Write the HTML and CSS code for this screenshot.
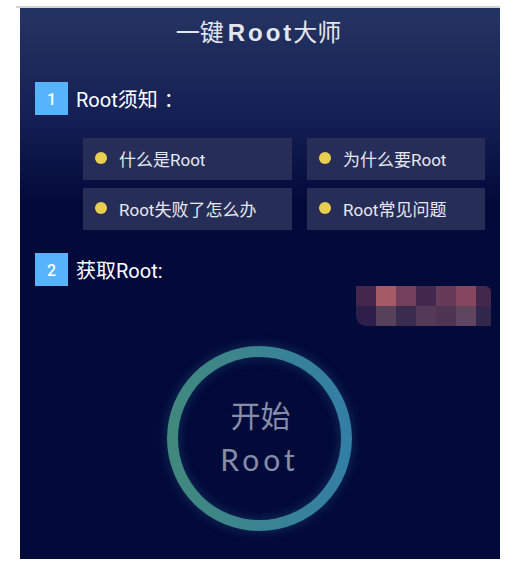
FILE: index.html
```html
<!DOCTYPE html>
<html lang="zh-CN">
  <head>
    <meta charset="UTF-8" />
    <title>一键Root大师</title>
    <link rel="stylesheet" href="styles.css">
  </head>
  <body>
    <div class="top-line"></div>
    <div class="app">
      <h1 class="title">一键<b>Root</b>大师</h1>

      <!-- Root须知 -->
      <div class="step">
        <span class="step-num">1</span>
        <span class="step-text">Root须知<span class="colon">：</span></span>
      </div>
      <div class="faq">
        <div class="faq-item"><i class="dot"></i>什么是Root</div>
        <div class="faq-item"><i class="dot"></i>为什么要Root</div>
        <div class="faq-item"><i class="dot"></i>Root失败了怎么办</div>
        <div class="faq-item"><i class="dot"></i>Root常见问题</div>
      </div>

      <!-- 获取Root -->
      <div class="step step-two">
        <span class="step-num">2</span>
        <span class="step-text">获取Root:</span>
      </div>

      <!-- 打码区域 -->
      <div class="mosaic">
        <i class="m1"></i><i class="m2"></i><i class="m3"></i><i class="m4"></i><i class="m5"></i><i class="m6"></i><i class="m7"></i>
        <i class="m8"></i><i class="m9"></i><i class="m10"></i><i class="m11"></i><i class="m12"></i><i class="m13"></i><i class="m14"></i>
      </div>

      <div class="ring">
        <div class="ring-inner">
          <span class="ring-cn">开始</span>
          <span class="ring-en">Root</span>
        </div>
      </div>
    </div>
  </body>
</html>
```

FILE: styles.css
```css
/* base */
body {
  margin: 0;
  padding: 0;
  background-color: #fff;
  font-family: "Roboto", "Noto Sans CJK SC", sans-serif;
}
.top-line {
  height: 2px;
  width: 484px;
  margin: 6px 0 0 16px;
  background-color: #d4d4d0;
}
.app {
  position: relative;
  width: 480px;
  height: 551px;
  margin-left: 20px;
  overflow: hidden;
  color: #fff;
  background: linear-gradient(180deg, #243462 0, #141f53 110px, #020a3a 195px, #020a3a 100%);
}

/* title */
.title {
  margin: 0;
  height: 48px;
  padding-right: 3px;
  line-height: 49px;
  text-align: center;
  font-size: 24px;
  font-weight: normal;
  color: #e4e6ec;
}
.title b {
  margin: 0 -1px 0 4px;
  font-family: "Liberation Sans", sans-serif;
  letter-spacing: 3px;
}

/* steps */
.step {
  display: flex;
  align-items: center;
  margin: 26px 0 0 15px;
}
.step-two {
  margin-top: 23px;
}
.step-num {
  width: 33px;
  height: 33px;
  line-height: 36px;
  text-align: center;
  font-size: 16px;
  font-weight: 500;
  background-color: #56b4fd;
}
.step-text {
  margin-left: 8px;
  font-size: 20px;
}
.colon {
  padding-left: 6px;
  font-family: "Noto Sans CJK TC", sans-serif;
}

/* faq */
.faq {
  display: grid;
  grid-template-columns: 209px 178px;
  gap: 8px 15px;
  margin: 23px 0 0 63px;
}
.faq-item {
  display: flex;
  align-items: center;
  box-sizing: border-box;
  height: 42px;
  padding: 0 0 2px 12px;
  font-size: 17px;
  color: #e6e8f0;
  background-color: #262e58;
}
.dot {
  width: 12px;
  height: 12px;
  margin-right: 12px;
  border-radius: 50%;
  background-color: #e8cf50;
}

/* mosaic */
.mosaic {
  position: absolute;
  left: 336px;
  top: 278px;
  display: grid;
  grid-template-columns: repeat(7, 20px);
  grid-auto-rows: 20px;
  width: 135px;
  border-radius: 0 6px 0 10px;
  overflow: hidden;
}
.m1 { background-color: #45264d; }
.m2 { background-color: #a55a68; }
.m3 { background-color: #733f5c; }
.m4 { background-color: #44294f; }
.m5 { background-color: #663a58; }
.m6 { background-color: #85465e; }
.m7 { background-color: #44274d; }
.m8 { background-color: #2d1f49; }
.m9 { background-color: #574059; }
.m10 { background-color: #3a2c4e; }
.m11 { background-color: #553a58; }
.m12 { background-color: #4e3554; }
.m13 { background-color: #5f4560; }
.m14 { background-color: #31264c; }

/* start button */
.ring {
  width: 185px;
  height: 185px;
  margin: 60px 0 0 147px;
  padding: 11px;
  box-sizing: border-box;
  border-radius: 50%;
  background: linear-gradient(90deg, #41897c, #337ea6);
  box-shadow: 0 0 12px rgba(70, 140, 170, 0.3);
}
.ring-inner {
  display: flex;
  flex-direction: column;
  align-items: center;
  height: 100%;
  border-radius: 50%;
  background-color: #020a3a;
  box-shadow: inset 0 0 12px rgba(70, 140, 170, 0.3);
  color: #858da9;
}
.ring-cn {
  margin: 40px 0 0 2px;
  font-size: 30px;
  line-height: 40px;
}
.ring-en {
  margin-top: 2px;
  font-family: "Lato", sans-serif;
  font-size: 30px;
  line-height: 40px;
  letter-spacing: 4px;
}
```
